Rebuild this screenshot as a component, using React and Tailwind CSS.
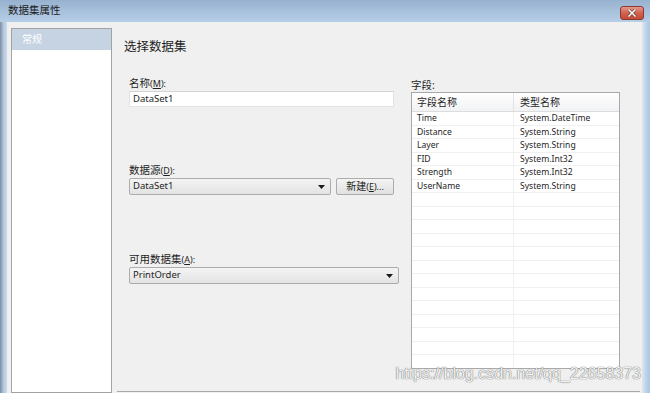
const fields = [
  { name: "Time", type: "System.DateTime" },
  { name: "Distance", type: "System.String" },
  { name: "Layer", type: "System.String" },
  { name: "FID", type: "System.Int32" },
  { name: "Strength", type: "System.Int32" },
  { name: "UserName", type: "System.String" },
];

const emptyRows = Array.from({ length: 13 });

function Label({ text, hotkey }) {
  return (
    <div className="h-[14px] leading-[14px] text-[10.5px] text-[#1e1e1e]">
      {text}
      <span className="text-[9px]">
        (<span className="underline">{hotkey}</span>):
      </span>
    </div>
  );
}

function Arrow() {
  return (
    <svg width="7" height="4" viewBox="0 0 7 4">
      <path d="M0 0h7L3.5 4z" fill="#1a1a1a" />
    </svg>
  );
}

function Select({ value, className }) {
  return (
    <div
      className={`flex items-center justify-between h-[17px] pl-[3px] pr-[5px] rounded-[2px] border border-[#acacac] bg-gradient-to-b from-[#f4f4f4] to-[#e3e3e3] text-[9.5px] text-[#1e1e1e] ${className}`}
    >
      <span>{value}</span>
      <Arrow />
    </div>
  );
}

export default function App() {
  return (
    <div className="relative w-[650px] h-[393px] overflow-hidden bg-[#f0f0f0] [font-family:'Noto_Sans','Noto_Sans_CJK_SC',sans-serif]">
      {/* title bar */}
      <div className="flex items-center justify-between h-[22px] pl-[8px] pr-[6px] bg-gradient-to-b from-[#97b2cf] to-[#b7cee7]">
        <span className="text-[10.5px] text-[#1a1a1a]">数据集属性</span>
        <div className="flex items-center justify-center w-[24px] h-[14px] mt-[3px] rounded-[3px] border border-[#8b3b31] bg-gradient-to-b from-[#e5978a] via-[#d2624f] to-[#c44a34]">
          <svg width="10" height="8" viewBox="0 0 10 8">
            <path
              d="M1.5 0.5L8.5 7.5M8.5 0.5L1.5 7.5"
              stroke="#5a2a25"
              strokeWidth="2.8"
              fill="none"
            />
            <path
              d="M1.5 0.5L8.5 7.5M8.5 0.5L1.5 7.5"
              stroke="#ffffff"
              strokeWidth="1.6"
              fill="none"
            />
          </svg>
        </div>
      </div>

      <div className="flex h-[371px]">
        {/* left frame */}
        <div className="w-[7px] bg-gradient-to-r from-[#7d8ea2] via-[#b2c6dc] to-[#cddcec]" />

        <div className="flex flex-1 pt-[6px] pl-[4px]">
          {/* nav list */}
          <div className="w-[101px] h-[365px] border border-[#a3a3a3] bg-white">
            <div className="h-[21px] leading-[21px] pl-[10px] bg-[#c5d3e2] text-[10px] text-white">
              常规
            </div>
          </div>

          {/* main */}
          <div className="flex flex-col flex-1 pt-[11px]">
            <div className="ml-[12px] h-[16px] leading-[16px] text-[12.5px] text-[#1e1e1e]">
              选择数据集
            </div>

            <div className="flex items-start">
              <div className="ml-[17px] mt-[21px] w-[269px]">
                <Label text="名称" hotkey="M" />
                <div className="mt-[1px] w-[265px] h-[16px] leading-[14px] pl-[3px] border border-[#e2e3e6] border-t-[#d2d4d8] bg-white text-[9.5px] text-[#1e1e1e]">
                  DataSet1
                </div>

                <div className="mt-[56px]">
                  <Label text="数据源" hotkey="D" />
                </div>
                <div className="flex mt-[1px] gap-[5px]">
                  <Select value="DataSet1" className="w-[202px]" />
                  <div className="flex items-center justify-center w-[58px] h-[17px] rounded-[2px] border border-[#acacac] bg-gradient-to-b from-[#f4f4f4] to-[#e1e1e1] text-[10px] text-[#1e1e1e]">
                    新建<span className="text-[9px]">(<span className="underline">E</span>)...</span>
                  </div>
                </div>

                <div className="mt-[57px]">
                  <Label text="可用数据集" hotkey="A" />
                </div>
                <Select value="PrintOrder" className="mt-[1px] w-[270px]" />
              </div>

              <div className="ml-[13px] mt-[23px] w-[209px]">
                <div className="h-[14px] leading-[14px] text-[10.5px] text-[#1e1e1e]">字段:</div>
                <div className="h-[277px] border border-[#a9a9a9] bg-white overflow-hidden">
                  <div className="flex h-[19px] border-b border-[#dcdcdc] bg-gradient-to-b from-white to-[#f1f2f4] text-[10px] text-[#1e1e1e]">
                    <div className="w-[102px] pl-[5px] leading-[19px] border-r border-[#e3e3e3]">字段名称</div>
                    <div className="flex-1 pl-[6px] leading-[19px]">类型名称</div>
                  </div>
                  {fields.map((f) => (
                    <div
                      key={f.name}
                      className="flex h-[13.5px] border-b border-[#f0f0f0] text-[8.6px] text-[#1e1e1e]"
                    >
                      <div className="w-[102px] pl-[5px] leading-[13px] border-r border-[#f0f0f0]">{f.name}</div>
                      <div className="flex-1 pl-[6px] leading-[13px]">{f.type}</div>
                    </div>
                  ))}
                  {emptyRows.map((_, i) => (
                    <div key={i} className="flex h-[13.5px] border-b border-[#f0f0f0]">
                      <div className="w-[102px] border-r border-[#f0f0f0]" />
                    </div>
                  ))}
                </div>
              </div>
            </div>

            <div className="mt-auto mb-[1px] ml-[5px] mr-[2px] h-[1px] bg-[#a8a8a8]" />
          </div>
        </div>

        {/* right frame */}
        <div className="w-[8px] bg-gradient-to-r from-[#dfe7f0] via-[#bcd3ea] to-[#aac6e4]" />
      </div>

      {/* watermark */}
      <div className="absolute right-[9px] top-[362px] text-[16px] [font-family:'Liberation_Sans',Arial,sans-serif] text-white/90 [text-shadow:0_0_1px_#6f6f6f,0_0_1px_#6f6f6f]">
        https://blog.csdn.net/qq_22658373
      </div>
    </div>
  );
}
